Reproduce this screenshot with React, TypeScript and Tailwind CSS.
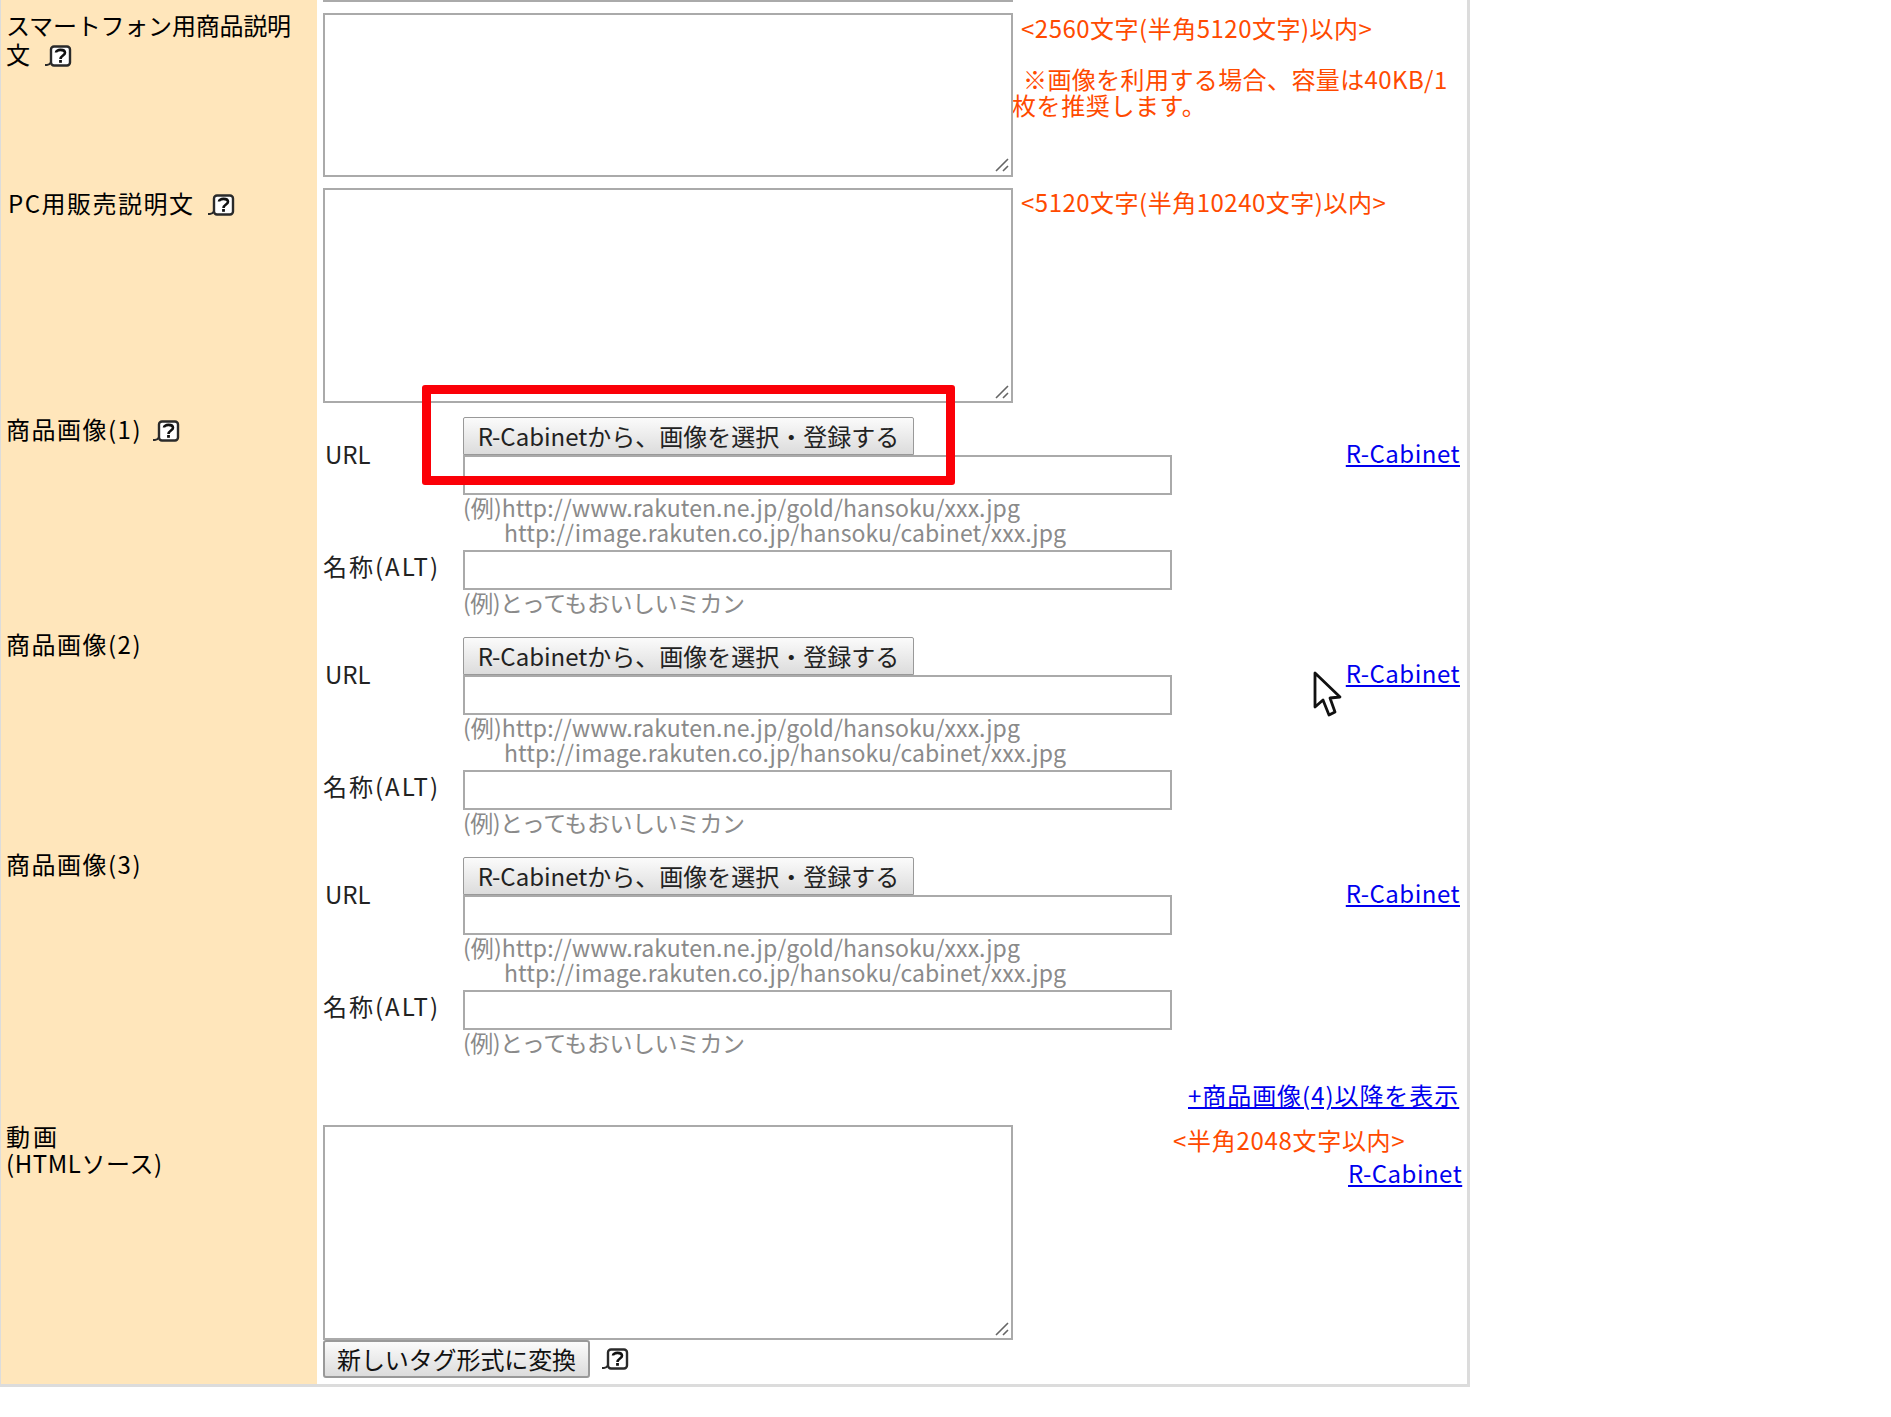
const font = { fontFamily: '"Noto Sans CJK JP", "Liberation Sans", sans-serif' };

function Help({ className = "" }: { className?: string }) {
  return (
    <svg width="32" height="24" viewBox="0 0 32 24" className={"inline-block align-middle " + className}>
      <rect x="11" y="2.5" width="19" height="19" rx="3" fill="#fff" stroke="#2a2a2a" strokeWidth="2.4" />
      <path d="M5 21 H7 C9 21 10 20 11 18.5" stroke="#2a2a2a" strokeWidth="2.2" fill="none" />
      <path d="M16 8.5 C16 5 25 5 25 8.8 C25 11.5 20.5 11.5 20.5 15" stroke="#111" strokeWidth="2.6" fill="none" />
      <rect x="19.1" y="16" width="2.8" height="2.8" fill="#111" />
    </svg>
  );
}

function Area({ className }: { className: string }) {
  return (
    <div className="relative shrink-0">
      <textarea className={"block w-[690px] resize-none border-2 border-[#aaa] bg-white " + className} />
      <svg width="16" height="16" viewBox="0 0 16 16" className="absolute bottom-[3px] right-[3px]">
        <path d="M2 14 L14 2 M9 14 L14 9" stroke="#666" strokeWidth="1.6" fill="none" />
      </svg>
    </div>
  );
}

function ImageRow({ title, help, rowClass, labelClass, contentClass }: { title: string; help?: boolean; rowClass: string; labelClass: string; contentClass: string }) {
  return (
    <div className={"flex " + rowClass}>
      <div className={"w-[316px] shrink-0 bg-[#ffe6bb] pl-[5px] text-[24px] leading-[29px] text-black " + labelClass}>
        <span className="tracking-[1.5px]">{title}</span>
        {help && <Help className="ml-[6px] -mt-[2px]" />}
      </div>
      <div className={"flex-1 pl-[6px] " + contentClass}>
        <div className="flex">
          <div className="w-[140px] shrink-0 pt-[22px] pl-[2px] text-[24px] leading-[29px] text-[#222]">URL</div>
          <div>
            <button className="block h-[38px] w-[451px] rounded-t-[2px] border border-[#999] bg-gradient-to-b from-[#fbfbfb] to-[#dcdcdc] text-center text-[24px] leading-[30px] tracking-[0px] text-[#222]">
              R-Cabinetから、画像を選択・登録する
            </button>
            <div className="h-[40px] w-[709px] border-2 border-[#aaa] bg-white" />
            <div className="text-[23px] leading-[25px] text-[#8a8a8a]">
              <div className="tracking-[0.08px]">(例)http://www.rakuten.ne.jp/gold/hansoku/xxx.jpg</div>
              <div className="pl-[41px] tracking-[0.1px]">http://image.rakuten.co.jp/hansoku/cabinet/xxx.jpg</div>
            </div>
          </div>
          <a href="#" className="ml-auto mr-[7px] mt-[21px] h-fit text-[24px] leading-[29px] tracking-[0.5px] text-[#0000ee] underline">
            R-Cabinet
          </a>
        </div>
        <div className="flex pt-[5px]">
          <div className="w-[140px] shrink-0 pt-[1px] text-[24px] leading-[29px] tracking-[2px] text-[#222]">名称(ALT)</div>
          <div>
            <div className="h-[40px] w-[709px] border-2 border-[#aaa] bg-white" />
            <div className="text-[23px] leading-[25px] tracking-[-0.5px] text-[#8a8a8a]">(例)とってもおいしいミカン</div>
          </div>
        </div>
      </div>
    </div>
  );
}

export default function App() {
  return (
    <div className="relative h-[1417px] w-[1891px] overflow-hidden bg-white" style={font}>
      <div className="h-[1387px] w-[1470px] border-l border-r-[3px] border-b-[3px] border-[#dcdcdc]">
        <div className="flex h-[2px]">
          <div className="w-[316px] shrink-0 bg-[#ffe6bb]" />
          <div className="ml-[6px] h-[2px] w-[690px] bg-[#aaa]" />
        </div>

        <div className="flex h-[174px]">
          <div className="w-[316px] shrink-0 bg-[#ffe6bb] pl-[5px] pt-[8px] text-[24px] leading-[29px] text-black">
            <div className="tracking-[-0.2px]">スマートフォン用商品説明</div>
            <div>文<Help className="ml-[10px] -mt-[2px]" /></div>
          </div>
          <div className="flex flex-1 pl-[6px] pt-[11px]">
            <Area className="h-[164px]" />
            <div className="pl-[8px] pt-[2px] text-[24px] leading-[26px] tracking-[0.5px] text-[#ff4a00]">
              <div className="h-[51px]">&lt;2560文字(半角5120文字)以内&gt;</div>
              <div className="pl-[2px] tracking-[0.4px]">※画像を利用する場合、容量は40KB/1</div>
              <div className="-ml-[9px] tracking-[0.6px]">枚を推奨します。</div>
            </div>
          </div>
        </div>

        <div className="flex h-[227px]">
          <div className="w-[316px] shrink-0 bg-[#ffe6bb] pl-[7px] pt-[12px] text-[24px] leading-[29px] tracking-[1.5px] text-black">
            PC用販売説明文<Help className="ml-[8px] -mt-[2px]" />
          </div>
          <div className="flex flex-1 pl-[6px] pt-[12px]">
            <Area className="h-[215px]" />
            <div className="pl-[8px] pt-[1px] text-[24px] leading-[26px] tracking-[0.5px] text-[#ff4a00]">
              &lt;5120文字(半角10240文字)以内&gt;
            </div>
          </div>
        </div>

        <ImageRow title="商品画像(1)" help rowClass="h-[209px]" labelClass="pt-[11px]" contentClass="pt-[14px]" />
        <ImageRow title="商品画像(2)" rowClass="h-[220px]" labelClass="pt-[17px]" contentClass="pt-[25px]" />
        <ImageRow title="商品画像(3)" rowClass="h-[220px]" labelClass="pt-[17px]" contentClass="pt-[25px]" />

        <div className="flex h-[332px]">
          <div className="w-[316px] shrink-0 bg-[#ffe6bb] pl-[5px] pt-[70px] text-[24px] leading-[27px] text-black">
            <div className="tracking-[3px]">動画</div>
            <div className="tracking-[0.6px]">(HTMLソース)</div>
          </div>
          <div className="flex-1 pl-[6px]">
            <div className="flex pt-[73px]">
              <Area className="h-[215px]" />
            </div>
            <div className="flex items-center">
              <button className="h-[38px] w-[267px] rounded-[3px] border-2 border-[#999] bg-gradient-to-b from-[#fbfbfb] to-[#dcdcdc] text-[24px] leading-[30px] tracking-[-0.1px] text-[#111]">
                新しいタグ形式に変換
              </button>
              <Help className="ml-[7px]" />
            </div>
          </div>
        </div>
      </div>

      <a href="#" className="absolute left-[1188px] top-[1080px] text-[24px] leading-[29px] tracking-[0.95px] text-[#0000ee] underline">
        +商品画像(4)以降を表示
      </a>
      <div className="absolute left-[1173px] top-[1125px] text-[24px] leading-[29px] tracking-[0.7px] text-[#ff4a00]">&lt;半角2048文字以内&gt;</div>
      <a href="#" className="absolute left-[1348px] top-[1158px] text-[24px] leading-[29px] tracking-[0.5px] text-[#0000ee] underline">
        R-Cabinet
      </a>

      <div className="absolute left-[422px] top-[385px] h-[100px] w-[533px] rounded-[3px] border-[9px] border-[#fb0007]" />

      <svg width="30" height="50" viewBox="0 0 30 50" className="absolute left-[1313px] top-[671px]">
        <path d="M2 2 L2 36 L10 29 L16 44 L22 41 L17 27 L27 26 Z" fill="#fff" stroke="#111" strokeWidth="2.8" strokeLinejoin="round" />
      </svg>
    </div>
  );
}
